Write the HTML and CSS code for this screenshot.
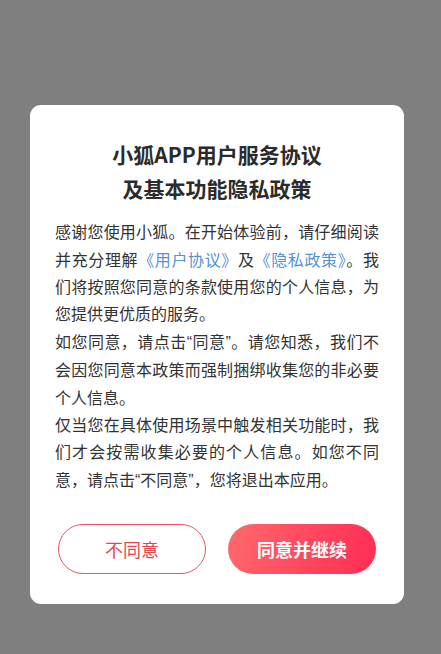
FILE: index.html
```html
<!DOCTYPE html>
<html lang="zh-CN">
<head>
<meta charset="utf-8">
<title>小狐APP用户服务协议</title>
<link rel="stylesheet" href="styles.css">
</head>
<body>
<div class="dialog">
  <h1 class="title">小狐APP用户服务协议<br>及基本功能隐私政策</h1>
  <div class="content">
    <p>感谢您使用小狐。在开始体验前，请仔细阅读并充分理解<a class="link">《用户协议》</a>及<a class="link">《隐私政策》</a>。我们将按照您同意的条款使用您的个人信息，为您提供更优质的服务。</p>
    <p>如您同意，请点击<span class="q">“</span>同意<span class="q">”</span>。请您知悉，我们不会因您同意本政策而强制捆绑收集您的非必要个人信息。</p>
    <p>仅当您在具体使用场景中触发相关功能时，我们才会按需收集必要的个人信息。如您不同意，请点击<span class="q">“</span>不同意<span class="q">”</span>，您将退出本应用。</p>
  </div>
  <div class="actions">
    <button class="btn btn-reject">不同意</button>
    <button class="btn btn-accept">同意并继续</button>
  </div>
</div>
</body>
</html>
```
FILE: styles.css
```css
html, body {
  margin: 0;
  padding: 0;
}
body {
  background: #7f7f7f;
  width: 441px;
  height: 654px;
  font-family: "Noto Sans CJK SC", "Noto Sans", sans-serif;
  overflow: hidden;
}
.dialog {
  box-sizing: border-box;
  margin: 105px 0 0 30px;
  width: 374px;
  height: 499px;
  background: #ffffff;
  border-radius: 11px;
  padding: 33px 25px 0 25px;
  display: flex;
  flex-direction: column;
}
.title {
  margin: 0;
  text-align: center;
  font-size: 21px;
  line-height: 33.6px;
  font-weight: 700;
  color: #2b2b2b;
}
.content {
  margin-top: 13px;
  font-size: 16px;
  line-height: 27.4px;
  color: #333333;
  text-align: justify;
}
.content p {
  margin: 0;
}
.q {
  font-family: "Liberation Sans", sans-serif;
}
.link {
  color: #5692d6;
  text-decoration: none;
}
.actions {
  margin-top: 30px;
  display: flex;
  justify-content: center;
  gap: 22px;
}
.btn {
  box-sizing: border-box;
  width: 148px;
  height: 50px;
  border-radius: 25px;
  font-family: "Noto Sans CJK SC", "Noto Sans", sans-serif;
  font-size: 18px;
  padding: 0;
  cursor: pointer;
}
.btn-reject {
  background: #ffffff;
  border: 1.5px solid #e9545d;
  color: #e3464f;
}
.btn-accept {
  border: none;
  color: #ffffff;
  font-weight: 700;
  background: linear-gradient(105deg, #ff6a6c 0%, #ff4a5f 50%, #ff2c55 100%);
}
```
